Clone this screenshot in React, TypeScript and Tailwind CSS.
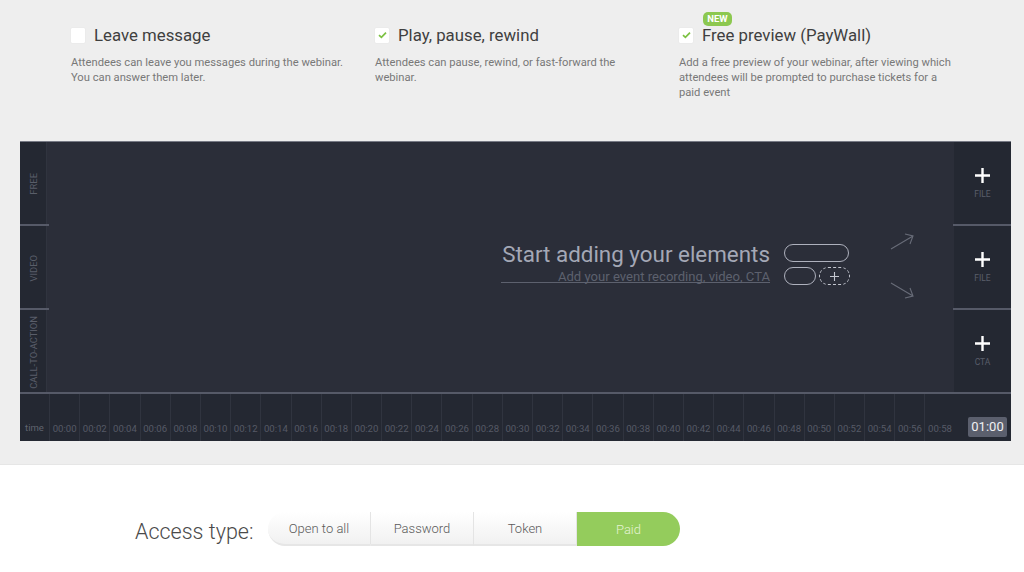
import React from "react";

const font = { fontFamily: "Roboto, sans-serif" };

function Feature({ title, checked, isNew, lines, width }: { title: string; checked: boolean; isNew?: boolean; lines: string; width: string }) {
  return (
    <div className="w-[304px] shrink-0">
      <div className="flex items-center h-[22px] relative">
        <div className="w-[14px] h-[15px] bg-white rounded-[1px] flex items-center justify-center shrink-0 shadow-[0_0_1px_rgba(0,0,0,0.15)]">
          {checked && (
            <svg width="9" height="8" viewBox="0 0 9 8">
              <path d="M1 4.2 L3.4 6.4 L8 1.6" fill="none" stroke="#7cc142" strokeWidth="1.7" />
            </svg>
          )}
        </div>
        <span className="ml-[9px] text-[16.8px] text-[#3f3f3f] leading-[22px] whitespace-nowrap">{title}</span>
        {isNew && (
          <span className="absolute left-[24px] top-[-12px] w-[29px] h-[14px] rounded-[5px] bg-[#8cc850] text-white text-[9.5px] font-bold leading-[14px] text-center">
            NEW
          </span>
        )}
      </div>
      <p className={`mt-[9px] text-[11.2px] leading-[15px] text-[#787878] ${width}`}>{lines}</p>
    </div>
  );
}

function Row({ label, action, last }: { label: string; action: string; last?: boolean }) {
  return (
    <div className={`relative flex ${last ? "h-[82px]" : "h-[84px]"}`}>
      <div className={`w-[27px] shrink-0 bg-[#242832] border-r border-[#30343f] flex items-center justify-center overflow-hidden pl-[2px] ${last ? "pt-[2px]" : ""}`}>
        <span className="[writing-mode:vertical-rl] rotate-180 text-[9.4px] text-[#5a5e6a] whitespace-nowrap">{label}</span>
      </div>
      <div className="flex-1" />
      <div className="w-[57px] shrink-0 bg-[#242832] flex flex-col items-center pt-[26px]">
        <svg width="15" height="15" viewBox="0 0 15 15">
          <path d="M7.5 0 V15 M0 7.5 H15" stroke="#ffffff" strokeWidth="2.4" />
        </svg>
        <span className="mt-[6px] text-[8.5px] leading-[10px] text-[#5a5e6a]">{action}</span>
      </div>
      {!last && (
        <>
          <div className="absolute left-0 bottom-0 w-[29px] h-[2px] bg-[#565a68]" />
          <div className="absolute right-0 bottom-0 w-[58px] h-[2px] bg-[#565a68]" />
        </>
      )}
    </div>
  );
}

const ticks = Array.from({ length: 30 }, (_, i) => `00:${String(i * 2).padStart(2, "0")}`);

function Tab({ label, active, cls }: { label: string; active?: boolean; cls: string }) {
  return (
    <div
      className={`w-[103px] h-[34px] flex items-center justify-center text-[13px] font-light ${cls} ${
        active
          ? "bg-[#94cc5c] text-[#e4f3d2] pt-[1px]"
          : "bg-gradient-to-b from-white to-[#f1f1f1] text-[#5a5a5a] border-b-[2px] border-[#e6e6e6] border-r border-r-[#e4e4e4] pt-[2px]"
      }`}
    >
      {label}
    </div>
  );
}

export default function App() {
  return (
    <div className="w-[1024px] h-[572px] overflow-hidden bg-white" style={font}>
      <div className="h-[465px] bg-[#eeeeee] pt-[24px] border-b border-[#e6e6e6]">
        <div className="flex pl-[71px] h-[117px]">
          <Feature title="Leave message" checked={false} width="w-[290px]" lines="Attendees can leave you messages during the webinar. You can answer them later." />
          <Feature title="Play, pause, rewind" checked width="w-[270px]" lines="Attendees can pause, rewind, or fast-forward the webinar." />
          <Feature title="Free preview (PayWall)" checked isNew width="w-[275px]" lines="Add a free preview of your webinar, after viewing which attendees will be prompted to purchase tickets for a paid event" />
        </div>

        <div className="relative ml-[20px] w-[991px] h-[300px] bg-[#2b2e39] border-t border-[#777a85]">
          <Row label="FREE" action="FILE" />
          <Row label="VIDEO" action="FILE" />
          <Row label="CALL-TO-ACTION" action="CTA" last />
          <div className="h-[49px] border-t-[2px] border-[#565a68] bg-[#242832] flex relative">
            <div className="w-[29px] shrink-0 flex items-end justify-center pb-[7px] text-[9.5px] leading-[12px] text-[#60646f]">time</div>
            {ticks.map((t) => (
              <div key={t} className="w-[30.2px] shrink-0 border-l border-[#30343f] flex items-end justify-center pb-[6px] text-[9.6px] leading-[12px] text-[#565a66]">
                {t}
              </div>
            ))}
            <div className="absolute right-[4px] top-[23px] w-[39px] h-[20px] rounded-[2px] bg-[#5b5f6d] text-[#f0f0f2] text-[13px] leading-[20px] text-center">
              01:00
            </div>
          </div>

          {/* empty-state hint, laid over the tracks */}
          <div className="absolute left-[481px] top-[99px] flex items-start">
            <div className="w-[269px] text-right">
              <div className="text-[22.4px] leading-[26px] text-[#a4a8b6] whitespace-nowrap">Start adding your elements</div>
              <div className="text-[13.1px] leading-[13px] h-[14px] text-[#5d616e] border-b border-[#5d616e] mt-[2px] whitespace-nowrap pt-[1px]">
                Add your event recording, video, CTA
              </div>
            </div>
            <div className="ml-[14px] mt-[3px] w-[66px]">
              <div className="w-[65px] h-[18px] rounded-full border-[1.5px] border-[#aeb1bd]" />
              <div className="flex mt-[5px] gap-[3px]">
                <div className="w-[32px] h-[18px] rounded-full border-[1.5px] border-[#aeb1bd]" />
                <div className="w-[31px] h-[18px] rounded-full border-[1.5px] border-dashed border-[#c4c7d0] flex items-center justify-center">
                  <svg width="9" height="9" viewBox="0 0 9 9">
                    <path d="M4.5 0 V9 M0 4.5 H9" stroke="#c4c7d0" strokeWidth="1.1" />
                  </svg>
                </div>
              </div>
            </div>
            <svg className="ml-[40px] -mt-[9px]" width="26" height="70" viewBox="0 0 26 70">
              <g fill="none" stroke="#686c78" strokeWidth="1.1">
                <path d="M1 17 L23 4 M15 2 L23 4 L20 12" />
                <path d="M1 51 L23 64 M20 56 L23 64 L15 66" />
              </g>
            </svg>
          </div>
        </div>
      </div>

      <div className="flex items-start pl-[135px] mt-[47px]">
        <span className="text-[21.5px] font-light text-[#4a4a4a] w-[133px] leading-[34px] mt-[3px]">Access type:</span>
        <div className="flex">
          <Tab label="Open to all" cls="rounded-l-[17px]" />
          <Tab label="Password" cls="" />
          <Tab label="Token" cls="" />
          <Tab label="Paid" active cls="rounded-r-[17px]" />
        </div>
      </div>
    </div>
  );
}
